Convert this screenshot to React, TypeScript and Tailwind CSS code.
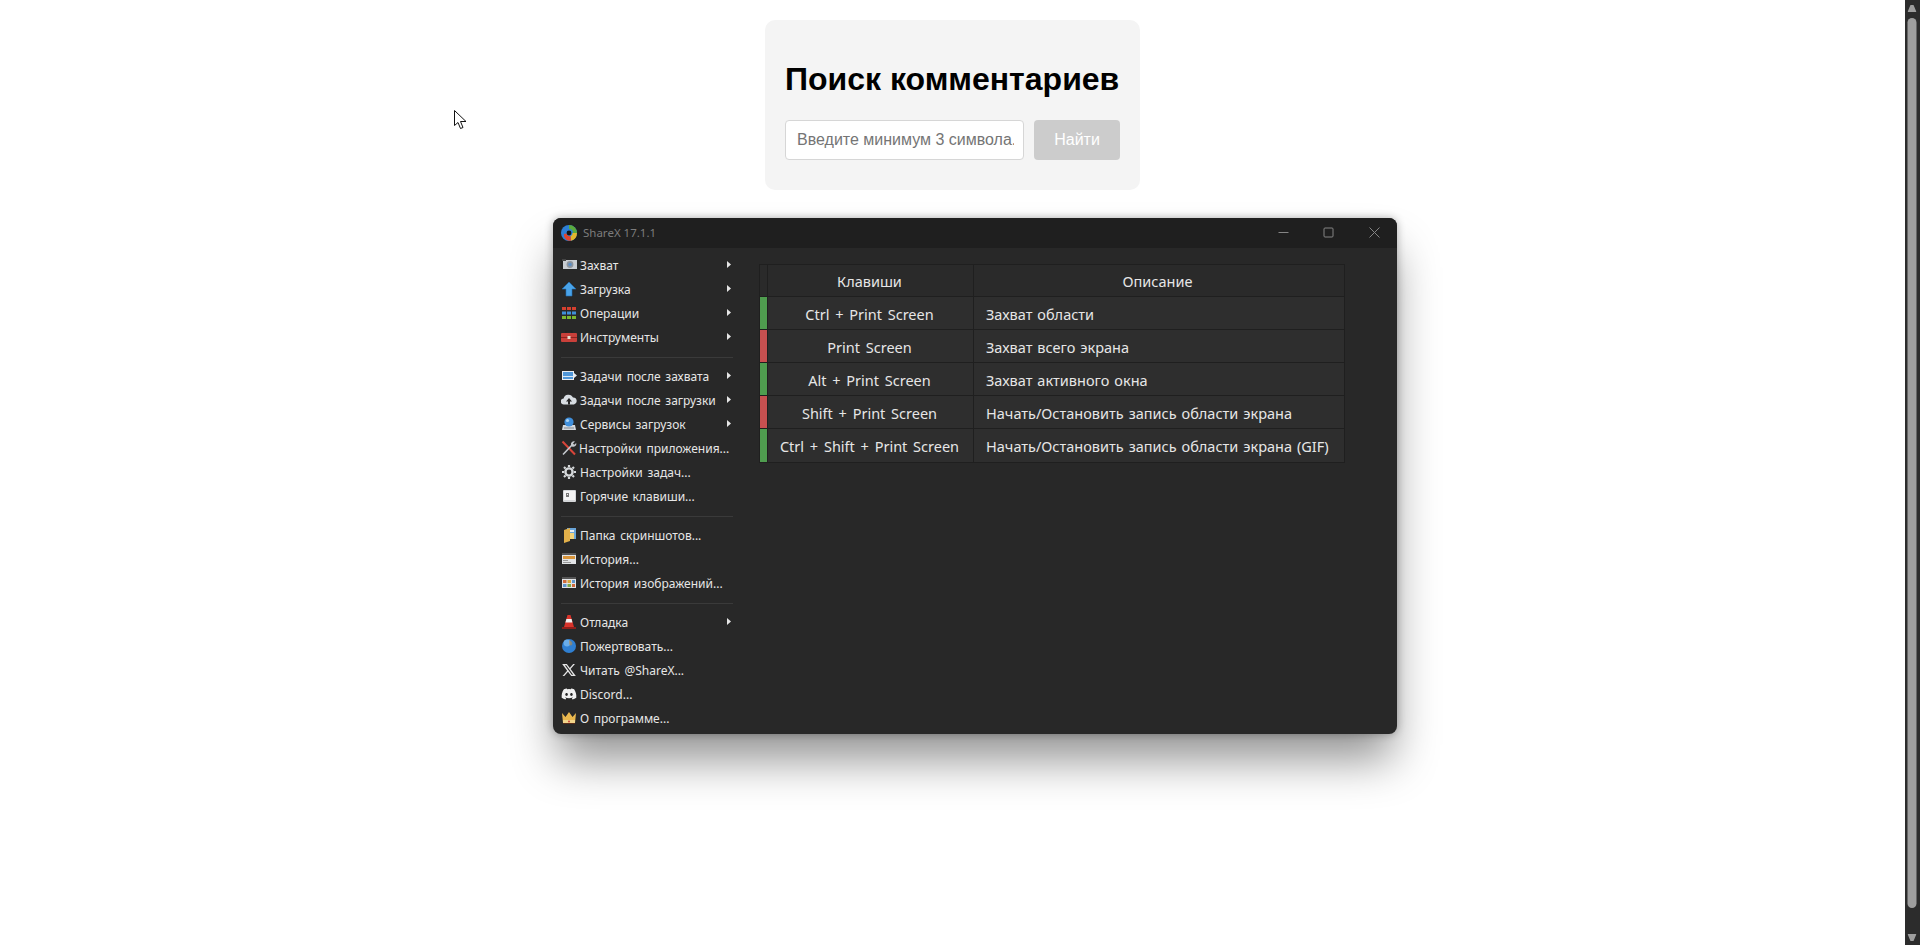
import { FaDiscord } from "react-icons/fa";
import { RiTwitterXLine } from "react-icons/ri";

const CameraIcon = () => (
  <svg width="16" height="16" viewBox="0 0 16 16">
    <rect x="0" y="3" width="3" height="9" fill="#222" />
    <rect x="2" y="3" width="14" height="9" fill="#c9cdd2" />
    <rect x="1" y="2" width="4" height="2" fill="#444" />
    <circle cx="9" cy="7.5" r="3.4" fill="#8d949c" />
    <circle cx="9" cy="7.5" r="1.8" fill="#5f8fc4" />
  </svg>
);
const UploadIcon = () => (
  <svg width="16" height="16" viewBox="0 0 16 16">
    <path d="M8 1 15 8H11V15H5V8H1Z" fill="#4aa3e8" stroke="#1e6fb5" strokeWidth="0.6" />
  </svg>
);
const DotsIcon = () => {
  const rows = ["#d6402f", "#3f8fd8", "#7cb82f"];
  return (
    <svg width="16" height="16" viewBox="0 0 16 16">
      {rows.map((c, r) =>
        [1, 6, 11].map((x) => <rect key={`${r}-${x}`} x={x} y={2 + r * 4.5} width="4" height="3" fill={c} />),
      )}
    </svg>
  );
};
const ToolboxIcon = () => (
  <svg width="16" height="16" viewBox="0 0 16 16">
    <path d="M5 4V2H11V4" fill="none" stroke="#222" strokeWidth="1.2" />
    <rect x="0" y="4" width="16" height="9" rx="1" fill="#c9403a" />
    <rect x="0" y="8" width="16" height="1" fill="#8d2320" />
    <rect x="6.5" y="7" width="3" height="3" fill="#e8e0d0" />
  </svg>
);
const TasksIcon = () => (
  <svg width="16" height="16" viewBox="0 0 16 16">
    <rect x="1" y="3" width="12" height="9" fill="#e8edf2" />
    <rect x="2" y="4" width="10" height="7" fill="#4f96d8" />
    <rect x="2" y="8" width="10" height="1" fill="#d8e8f5" />
    <path d="M13 5 16 7.5 13 10Z" fill="#e8edf2" />
  </svg>
);
const CloudIcon = () => (
  <svg width="16" height="16" viewBox="0 0 16 16">
    <path d="M3 12.5a3 3 0 0 1-.4-6A5 5 0 0 1 12 5.6a3.5 3.5 0 0 1 1 6.9Z" fill="#d8dde2" />
    <path d="M8 6 11 9.5H9V12.5H7V9.5H5Z" fill="#262626" />
  </svg>
);
const ServerIcon = () => (
  <svg width="16" height="16" viewBox="0 0 16 16">
    <path d="M2 9H14L15 14H1Z" fill="#d4d9de" />
    <rect x="3" y="11.5" width="10" height="1" fill="#7d8690" />
    <circle cx="8" cy="6" r="4.6" fill="#3f8fdc" />
    <circle cx="6.5" cy="4.5" r="1.6" fill="#a9d4f5" />
  </svg>
);
const ToolsIcon = () => (
  <svg width="16" height="16" viewBox="0 0 16 16">
    <path d="M1.5 1.5 14 14.5" stroke="#d8453a" strokeWidth="2" />
    <path d="M2 14.5 11 5" stroke="#c5c9ce" strokeWidth="1.6" />
    <path d="M10 5a3 3 0 0 1 4-3.5L12 3.5l1.2 1.2 2-1.8A3 3 0 0 1 11 6.5Z" fill="#c5c9ce" />
  </svg>
);
const GearIcon = () => (
  <svg width="16" height="16" viewBox="0 0 16 16">
    <path d="M8 3v-2M8 15v-2M3 8H1M15 8h-2M4.5 4.5 3 3M13 13l-1.5-1.5M4.5 11.5 3 13M13 3l-1.5 1.5" stroke="#d5d8da" strokeWidth="2.2" />
    <circle cx="8" cy="8" r="3.6" fill="none" stroke="#d5d8da" strokeWidth="2.4" />
  </svg>
);
const KeyIcon = () => (
  <svg width="16" height="16" viewBox="0 0 16 16">
    <rect x="2" y="2" width="13" height="12" rx="1" fill="#d4d6d8" />
    <rect x="3" y="3" width="11" height="9" fill="#f4f4f4" />
    <rect x="5" y="5" width="3" height="4" fill="#777" />
    <rect x="6" y="6" width="1" height="1" fill="#f4f4f4" />
  </svg>
);
const FolderIcon = () => (
  <svg width="16" height="16" viewBox="0 0 16 16">
    <rect x="6" y="1" width="9" height="11" fill="#6aa5d8" />
    <rect x="8" y="3" width="5" height="2" fill="#e8eef5" />
    <path d="M3 3 9 1V14L3 16Z" fill="#e2b04a" />
    <rect x="9" y="6" width="4" height="6" fill="#f2d27a" />
  </svg>
);
const HistoryIcon = () => (
  <svg width="16" height="16" viewBox="0 0 16 16">
    <rect x="1" y="2" width="14" height="11" fill="#e2e4e6" />
    <rect x="1" y="2" width="14" height="2" fill="#555" />
    <rect x="2" y="5" width="12" height="3" fill="#d9953a" />
    <rect x="2" y="9" width="5" height="1" fill="#999" />
    <rect x="2" y="11" width="8" height="1" fill="#999" />
  </svg>
);
const ImagesIcon = () => (
  <svg width="16" height="16" viewBox="0 0 16 16">
    <rect x="1" y="2" width="14" height="11" fill="#e2e4e6" />
    <rect x="1" y="2" width="14" height="2" fill="#555" />
    <rect x="2" y="5" width="3.5" height="3" fill="#cf6a3c" />
    <rect x="6.5" y="5" width="3.5" height="3" fill="#d9a63a" />
    <rect x="11" y="5" width="3" height="3" fill="#5f93c9" />
    <rect x="2" y="9" width="3.5" height="3" fill="#5f93c9" />
    <rect x="6.5" y="9" width="3.5" height="3" fill="#7aa84a" />
    <rect x="11" y="9" width="3" height="3" fill="#cf6a3c" />
  </svg>
);
const ConeIcon = () => (
  <svg width="16" height="16" viewBox="0 0 16 16">
    <path d="M6.5 1H9.5L13 13H3Z" fill="#d9342b" />
    <path d="M5.4 5H10.6L11.4 8.5H4.4Z" fill="#f0f0f0" />
    <rect x="1" y="13" width="14" height="2" fill="#8f1f1a" />
  </svg>
);
const GlobeIcon = () => (
  <svg width="16" height="16" viewBox="0 0 16 16">
    <circle cx="8" cy="8" r="7" fill="#2f7fd1" />
    <circle cx="6" cy="5" r="3.4" fill="#7dbcf0" opacity="0.75" />
    <path d="M8 2c3 1 4 3 3 5-2 1-3 0-3-2Z" fill="#b98a4a" opacity="0.6" />
  </svg>
);
const CrownIcon = () => (
  <svg width="16" height="16" viewBox="0 0 16 16">
    <path d="M1 3 4.5 7 8 2l3.5 5L15 3 14 13H2Z" fill="#eab84e" />
    <rect x="2" y="10" width="12" height="3" fill="#f2d58a" />
    <rect x="2" y="13" width="12" height="1" fill="#5a2c1a" />
    <circle cx="8" cy="11.5" r="1" fill="#c9403a" />
  </svg>
);
const LogoIcon = () => (
  <svg width="16" height="16" viewBox="0 0 16 16">
    <circle cx="8" cy="8" r="8" fill="#2d7fd6" />
    <path d="M8 0a8 8 0 0 1 8 8H12A4 4 0 0 0 8 4Z" fill="#5bab3d" />
    <path d="M16 8a8 8 0 0 1-6 7.7L9.5 11a3 3 0 0 0 2-3Z" fill="#e2b52c" />
    <path d="M10 15.7A6 6 0 0 1 3 9L5.5 8.5a3 3 0 0 0 4 2.5Z" fill="#e0442d" />
    <circle cx="8" cy="8" r="2.4" fill="#141414" />
  </svg>
);

type MenuItem = { label: string; icon: React.ReactNode; arrow?: boolean; tight?: boolean };

const menuGroups: MenuItem[][] = [
  [
    { label: "Захват", icon: <CameraIcon />, arrow: true },
    { label: "Загрузка", icon: <UploadIcon />, arrow: true },
    { label: "Операции", icon: <DotsIcon />, arrow: true },
    { label: "Инструменты", icon: <ToolboxIcon />, arrow: true },
  ],
  [
    { label: "Задачи после захвата", icon: <TasksIcon />, arrow: true },
    { label: "Задачи после загрузки", icon: <CloudIcon />, arrow: true },
    { label: "Сервисы загрузок", icon: <ServerIcon />, arrow: true },
    { label: "Настройки приложения...", icon: <ToolsIcon />, tight: true },
    { label: "Настройки задач...", icon: <GearIcon /> },
    { label: "Горячие клавиши...", icon: <KeyIcon /> },
  ],
  [
    { label: "Папка скриншотов...", icon: <FolderIcon /> },
    { label: "История...", icon: <HistoryIcon /> },
    { label: "История изображений...", icon: <ImagesIcon /> },
  ],
  [
    { label: "Отладка", icon: <ConeIcon />, arrow: true },
    { label: "Пожертвовать...", icon: <GlobeIcon /> },
    { label: "Читать @ShareX...", icon: <RiTwitterXLine className="w-[16px] h-[16px] text-[#e4e4e4]" /> },
    { label: "Discord...", icon: <FaDiscord className="w-[16px] h-[16px] text-[#f0f0f0]" /> },
    { label: "О программе...", icon: <CrownIcon /> },
  ],
];

const hotkeys = [
  { keys: "Ctrl + Print Screen", desc: "Захват области", color: "bg-[#4f9d4f]" },
  { keys: "Print Screen", desc: "Захват всего экрана", color: "bg-[#c75050]" },
  { keys: "Alt + Print Screen", desc: "Захват активного окна", color: "bg-[#4f9d4f]" },
  { keys: "Shift + Print Screen", desc: "Начать/Остановить запись области экрана", color: "bg-[#c75050]" },
  { keys: "Ctrl + Shift + Print Screen", desc: "Начать/Остановить запись области экрана (GIF)", color: "bg-[#4f9d4f]" },
];

function ShareXWindow() {
  return (
    <div
      className="ml-[45px] mt-[28px] w-[844px] h-[516px] shrink-0 flex flex-col rounded-[8px] overflow-hidden bg-[#282828] text-[#e6e6e6] shadow-[0_0_8px_rgba(0,0,0,0.3),0_30px_45px_-4px_rgba(0,0,0,0.42)]"
      style={{ fontFamily: '"Noto Sans", sans-serif' }}
    >
      {/* title bar */}
      <div className="h-[30px] shrink-0 bg-[#1f1f1f] flex items-center pl-[8px]">
        <LogoIcon />
        <span className="ml-[6px] text-[11.5px] text-[#7c7c7c]">ShareX 17.1.1</span>
        <div className="ml-auto flex items-center text-[#858585] pb-[1px]">
          <svg width="11" height="11" viewBox="0 0 11 11" className="mr-[34px]"><path d="M0.5 5.5H10.5" stroke="currentColor" /></svg>
          <svg width="11" height="11" viewBox="0 0 11 11" className="mr-[35px]"><rect x="1" y="1" width="9" height="9" rx="1" fill="none" stroke="currentColor" /></svg>
          <svg width="11" height="11" viewBox="0 0 11 11" className="mr-[17px]"><path d="M0.5 0.5 10.5 10.5M10.5 0.5 0.5 10.5" stroke="currentColor" /></svg>
        </div>
      </div>
      <div className="flex flex-1 min-h-0">
        {/* menu */}
        <div className="w-[206px] shrink-0 pt-[5.5px]">
          {menuGroups.map((group, g) => (
            <div key={g}>
              {g > 0 && <div className="h-[1px] bg-[#3a3a3a] ml-[8px] mr-[26px] my-[7px]" />}
              {group.map((item) => (
                <div key={item.label} className="h-[24px] flex items-center pl-[8px] pr-[28px] text-[12px] text-[#e6e6e6] [word-spacing:1.5px]">
                  <span className="w-[16px] h-[16px] shrink-0 flex -translate-y-[1px]">{item.icon}</span>
                  <span className={`whitespace-nowrap ${item.tight ? "ml-[2px]" : "ml-[3px]"}`}>{item.label}</span>
                  {item.arrow && (
                    <svg width="4" height="7" viewBox="0 0 4 7" className="ml-auto shrink-0 -translate-y-[1px]">
                      <path d="M0 0 4 3.5 0 7Z" fill="#e6e6e6" />
                    </svg>
                  )}
                </div>
              ))}
            </div>
          ))}
        </div>
        {/* hotkey table */}
        <div className="pt-[16px]">
          <div className="w-[586px] border border-[#1f1f1f] text-[14.5px] leading-none">
            <div className="flex h-[32px] bg-[#2a2a2a] border-b border-[#1f1f1f]">
              <div className="w-[8px] border-r border-[#1f1f1f]" />
              <div className="w-[206px] flex items-center justify-center border-r border-[#1f1f1f] pt-[1px] pr-[2px]">Клавиши</div>
              <div className="flex-1 flex items-center justify-center pt-[1px] pr-[3px]">Описание</div>
            </div>
            {hotkeys.map((row, i) => (
              <div key={row.keys} className={`flex h-[33px] bg-[#2e2e2e] ${i < hotkeys.length - 1 ? "border-b border-[#1f1f1f]" : ""}`}>
                <div className={`w-[8px] ${row.color} border-r border-[#1f1f1f]`} />
                <div className="w-[206px] flex items-center justify-center border-r border-[#1f1f1f] whitespace-nowrap pt-[2px] pr-[2px] [word-spacing:2px]">{row.keys}</div>
                <div className="flex-1 flex items-center pl-[12px] whitespace-nowrap pt-[2px] [word-spacing:1.2px]">{row.desc}</div>
              </div>
            ))}
          </div>
        </div>
      </div>
    </div>
  );
}

function Scrollbar() {
  return (
    <div className="w-[15px] shrink-0 h-full bg-[#2c2c2c] flex flex-col items-center">
      <svg width="9" height="7" viewBox="0 0 9 7" className="mt-[5px] shrink-0 -translate-x-[0.5px]"><path d="M3 0H6L9 7H0Z" fill="#9e9e9e" /></svg>
      <div className="w-[9px] mt-[6px] h-[890px] rounded-[5px] bg-[#9e9e9e] -translate-x-[0.5px]" />
      <svg width="9" height="7" viewBox="0 0 9 7" className="mt-auto mb-[4px] shrink-0 -translate-x-[0.5px]"><path d="M0 0H9L6 7H3Z" fill="#9e9e9e" /></svg>
    </div>
  );
}

export default function App() {
  return (
    <div className="relative flex h-screen overflow-hidden bg-white" style={{ fontFamily: '"Liberation Sans", Arial, sans-serif' }}>
      <div className="flex-1 flex flex-col items-center">
        <div className="mt-[20px] w-[375px] h-[170px] shrink-0 bg-[#f4f4f4] rounded-[10px] px-[20px] pt-[41px]">
          <h1 className="text-[32px] leading-[37px] font-bold text-black whitespace-nowrap">Поиск комментариев</h1>
          <div className="flex mt-[22px] gap-[10px]">
            <input
              className="w-[239px] h-[40px] pl-[11px] pr-[9px] bg-white border border-[#d6d6d6] rounded-[4px] text-[16px] placeholder:text-[#757575] outline-none"
              placeholder="Введите минимум 3 символа..."
              readOnly
            />
            <button disabled className="w-[86px] h-[40px] bg-[#cccccc] text-white text-[16px] rounded-[4px]">Найти</button>
          </div>
        </div>
        <ShareXWindow />
      </div>
      <Scrollbar />
      {/* mouse cursor captured in the screenshot */}
      <svg width="13" height="20" viewBox="0 0 13 20" className="absolute left-[454px] top-[110px]">
        <path d="M0.5 0.5V15.5L4 12.5 6.5 18.5 9 17.5 6.5 11.5H12Z" fill="#fff" stroke="#111" strokeWidth="1" />
      </svg>
    </div>
  );
}
